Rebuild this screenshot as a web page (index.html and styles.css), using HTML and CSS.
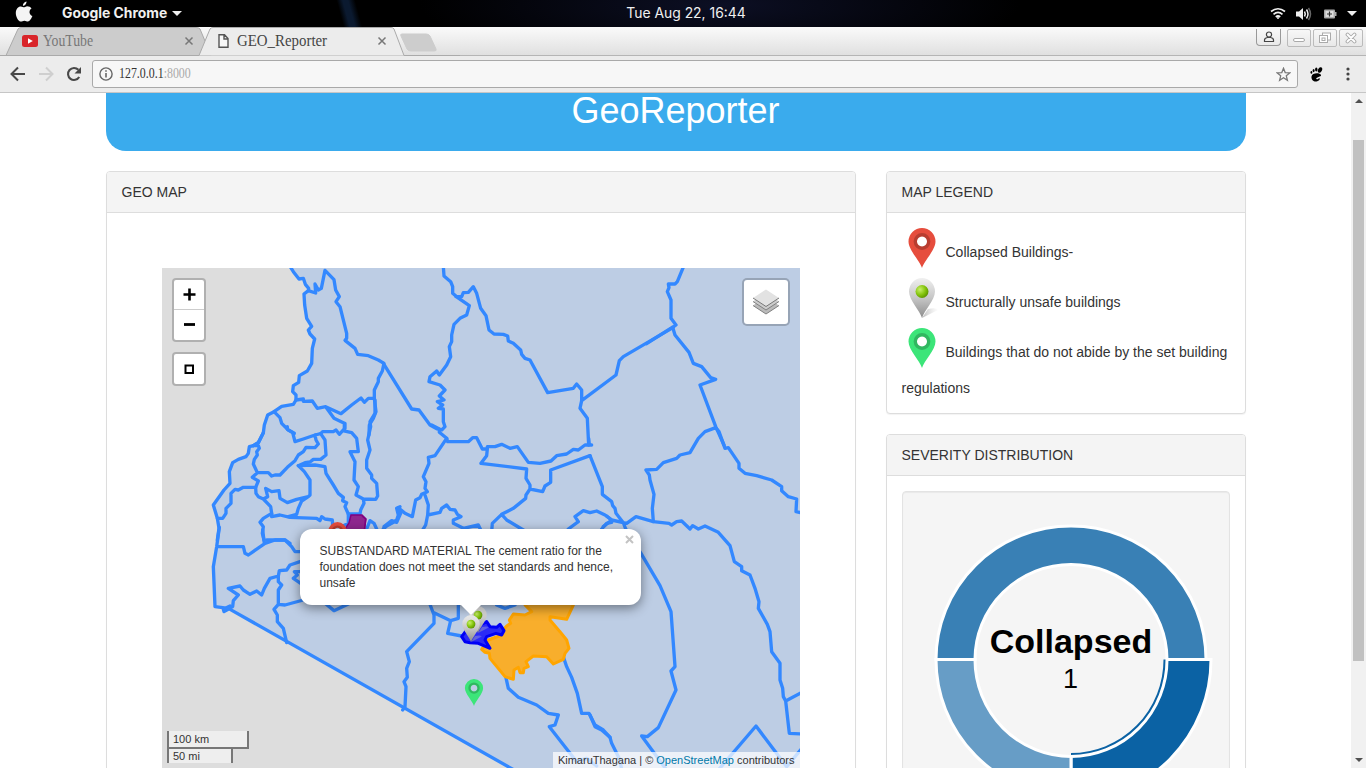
FILE: index.html
```html
<!DOCTYPE html>
<html lang="en">
<head>
<meta charset="utf-8">
<title>GEO_Reporter</title>
<link rel="stylesheet" href="styles.css">
</head>
<body>
<svg class="defs" width="0" height="0">
  <defs>
    <linearGradient id="silver" x1="0" y1="0" x2="0" y2="1"><stop offset="0" stop-color="#f0f0f0"/><stop offset=".5" stop-color="#c6c6c6"/><stop offset="1" stop-color="#8c8c8c"/></linearGradient>
    <linearGradient id="shade" x1="0" y1="0" x2="1" y2="0"><stop offset="0" stop-color="#888"/><stop offset="1" stop-color="#eee" stop-opacity=".3"/></linearGradient>
    <radialGradient id="ball" cx=".35" cy=".35" r=".7"><stop offset="0" stop-color="#c8f06a"/><stop offset=".6" stop-color="#83c40c"/><stop offset="1" stop-color="#5c9400"/></radialGradient>
    <symbol id="pin" viewBox="0 0 40 40">
      <path fill-rule="evenodd" d="M20 40C18 33 6.500 22 6.500 13.500a13.500 13.500 0 0 1 27 0C33.500 22 22 33 20 40zM20 8.500a5 5 0 1 0 .01 0z"/>
      <circle cx="20" cy="13.500" r="6.700" fill="none" stroke="#000" stroke-opacity=".2" stroke-width="3.400"/>
    </symbol>
    <symbol id="pin-silver" viewBox="0 0 40 40">
      <path d="M20 40L36 32Q34 29 26 31z" fill="url(#shade)" opacity=".6"/>
      <path d="M20 40C18 33 7 22 7 13.500a13 13.500 0 0 1 26 0C33 22 22 33 20 40z" fill="url(#silver)"/>
      <circle cx="20" cy="13.500" r="6.500" fill="url(#ball)"/>
    </symbol>
  </defs>
</svg>

<header class="topbar">
  <div class="app">
    <svg class="apple" width="18" height="22" viewBox="0 0 18 22"><path fill="#f4f4f4" d="M11.500.5c.2 2-1.600 4.400-3.600 4.300C7.700 2.700 9.600.8 11.500.5zM12 5.300c2 0 3.600.8 4.500 2.200-3 2-2.500 6.200.9 7.600-.8 2.200-2.700 5.500-4.500 5.500-1.300 0-1.900-.8-3.500-.8s-2.300.8-3.500.8C3.500 20.600.6 15.800.8 11.700.9 7.900 3.200 5.400 5.800 5.400c1.500 0 2.500.9 3.600.9.900 0 1.700-1 2.600-1z"/></svg>
    <span class="app-name">Google Chrome</span><i class="caret"></i>
  </div>
  <div class="clock">Tue Aug 22, 16:44</div>
  <div class="status">
    <svg width="16" height="13" viewBox="0 0 16 13" fill="none" stroke="#eee" stroke-width="1.700"><path d="M1 4.500Q8-1 15 4.500M3.500 7.300Q8 3.500 12.500 7.300M5.800 10Q8 8 10.200 10"/><circle cx="8" cy="11" r="1" fill="#eee" stroke="none"/></svg>
    <svg class="volume" width="16" height="14" viewBox="0 0 16 14"><path fill="#eee" d="M0 4.500h3L7 1v12L3 9.500H0z"/><path fill="none" stroke="#eee" stroke-width="1.500" d="M8.500 4.500q1.500 2.500 0 5M10.500 2.500q3 4.500 0 9"/><path fill="none" stroke="#666" stroke-width="1.500" d="M12.500 1q4 6 0 12"/></svg>
    <svg class="battery" width="13" height="10" viewBox="0 0 13 10"><rect width="11" height="9" y=".5" fill="#aaa" rx="1"/><rect x="1.500" y="2" width="8" height="6" fill="#ddd"/><path stroke="#333" stroke-width="1.200" d="M3 5h5M5.500 2.500v5"/><path fill="#aaa" d="M11 3h1.500v4H11z"/></svg>
    <i class="caret"></i>
  </div>
</header>

<div class="tabstrip">
  <svg class="tab-shapes" width="460" height="29" viewBox="0 0 460 29">
    <path d="M6 28.500L18 2Q19 .5 21 .5H196Q199 .5 200 2L211 28.500z" fill="#ccc" stroke="#aaa"/>
    <path d="M401 9Q400 7 402 7H426Q429 7 430 9L436 22Q437 24 434 24H411Q408 24 407 22z" fill="#cdcdcd" stroke="#cdcdcd"/>
    <path d="M199 28.500L210 2Q211 .5 213 .5H391Q393 .5 394 2L404 28.500z" fill="#ececec"/>
    <path d="M0 28.500H199L210 2Q211 .5 213 .5H391Q393 .5 394 2L404 28.500H460" fill="none" stroke="#aaa"/>
  </svg>
  <div class="tab tab-youtube">
    <svg width="16" height="12" viewBox="0 0 16 12"><rect width="16" height="12" rx="2.500" fill="#d9252a"/><path fill="#fff" d="M6 3.300L10.800 6 6 8.700z"/></svg>
    <span class="tab-title">YouTube</span>
    <svg class="tab-close" width="10" height="10" viewBox="0 0 10 10"><path d="M1.500 1.500l7 7m0-7l-7 7" stroke="#777" stroke-width="1.500"/></svg>
  </div>
  <div class="tab tab-geo">
    <svg width="11" height="14" viewBox="0 0 11 14"><path d="M1 .8h5.500L10 4.500v8.700H1zM6 1v4h4" fill="#f8f8f8" stroke="#555" stroke-width="1.400"/></svg>
    <span class="tab-title">GEO_Reporter</span>
    <svg class="tab-close" width="10" height="10" viewBox="0 0 10 10"><path d="M1.500 1.500l7 7m0-7l-7 7" stroke="#777" stroke-width="1.500"/></svg>
  </div>
  <div class="window-buttons">
    <span class="user-btn"><svg width="12" height="12" viewBox="0 0 12 12" fill="none" stroke="#444" stroke-width="1.200"><circle cx="6" cy="3.600" r="2.600"/><path d="M1.500 10.500V9q0-2 3-2.500h3q3 .5 3 2.500v1.500z"/></svg></span>
    <span class="win-btn"><svg width="14" height="12" viewBox="0 0 14 12"><rect x="1.500" y="6.500" width="11" height="3" rx="1.500" fill="#fff" stroke="#aaa"/></svg></span>
    <span class="win-btn"><svg width="14" height="12" viewBox="0 0 14 12" fill="#fff" stroke="#aaa"><rect x="4.500" y="1" width="8" height="7"/><rect x="1.500" y="3.500" width="8" height="7"/><rect x="4" y="6" width="3" height="2.500"/></svg></span>
    <span class="win-btn"><svg width="14" height="12" viewBox="0 0 14 12"><path d="M3.500 2.500l7 7m0-7l-7 7" stroke="#aaa" stroke-width="3.800" stroke-linecap="round"/><path d="M3.500 2.500l7 7m0-7l-7 7" stroke="#fff" stroke-width="1.800" stroke-linecap="round"/></svg></span>
  </div>
</div>

<div class="toolbar">
  <svg class="nav" width="16" height="16" viewBox="0 0 16 16"><path d="M15 8H2M8 1.500L1.500 8 8 14.500" fill="none" stroke="#484848" stroke-width="2"/></svg>
  <svg class="nav" width="16" height="16" viewBox="0 0 16 16"><path d="M1 8h13M8 1.500L14.500 8 8 14.500" fill="none" stroke="#cfcfcf" stroke-width="2"/></svg>
  <svg class="nav" width="16" height="16" viewBox="0 0 16 16"><path d="M13.200 11A6 6 0 1 1 12.400 3.800" fill="none" stroke="#484848" stroke-width="2.100"/><path fill="#484848" d="M15 1v6.500H8.500z"/></svg>
  <div class="address">
    <svg width="14" height="14" viewBox="0 0 14 14"><circle cx="7" cy="7" r="6.100" fill="none" stroke="#666" stroke-width="1.400"/><path stroke="#666" stroke-width="1.600" d="M7 6v4.500M7 3.300v1.500"/></svg>
    <span class="url">127.0.0.1<em>:8000</em></span>
    <svg class="star" width="15" height="15" viewBox="0 0 15 15"><path d="M7.500 1.300l1.700 4.300 4.600.3-3.500 2.900 1.100 4.500-3.900-2.500-3.900 2.500 1.100-4.500-3.500-2.900 4.600-.3z" fill="none" stroke="#777" stroke-width="1.300"/></svg>
  </div>
  <svg class="foot" width="13" height="15" viewBox="0 0 13 15"><g><ellipse cx="10" cy="3" rx="2" ry="2.900" transform="rotate(25 10 3)"/><ellipse cx="6.300" cy="2.500" rx="1.200" ry="1.900"/><ellipse cx="3.600" cy="3.600" rx="1" ry="1.600"/><ellipse cx="1.400" cy="5.400" rx=".9" ry="1.400"/><path d="M11 8C10 5.500 2 5.500 1.500 9.500 1 13 4 15 6.500 14.500 9 14 10.500 12 9.500 11.300 8.500 10.600 8 13 6.500 12 5.500 11.300 7 10.500 8.500 10 10 9.500 11.300 9 11 8z"/></g></svg>
  <svg class="menu" width="4" height="14" viewBox="0 0 4 14" fill="#444"><circle cx="2" cy="2" r="1.600"/><circle cx="2" cy="7" r="1.600"/><circle cx="2" cy="12" r="1.600"/></svg>
</div>

<div class="viewport">
  <div class="page">
    <div class="banner">GeoReporter</div>
    <div class="columns">
      <section class="panel">
        <div class="panel-heading">GEO MAP</div>
        <div class="map">
          <svg class="map-canvas" width="638" height="500" viewBox="162 268 638 500">
            <path class="land" d="M291 268L299 279 303 278 309 288 309 291 304 294 306 318 312 326 308 330 315 339 312 348 312 363 307 371 299 376 299 382 293 386 293 392 296 395 296 400 293 404 282 406 274 412 268 415 264 422 263 433 253 446 249 447 246 457 232 463 229 472 230 483 213 505 217 518 219 528 217 547 213 567 215 607 228 608 510 768H800V268z"/>
            <g class="border" transform="translate(160 265) scale(.33333)">
              <path d="M390 4L400 20 417 42 430 40 436 58 446 70 445 77 432 87 434 120 440 160 455 184 445 195 450 207 464 222 457 250 455 295 442 318 418 332 416 352 400 362 398 380 408 390 408 405 400 418 365 424 342 440 323 450 313 480 310 503 295 533 280 542"/>
              <path d="M445 77L467 84 465 57 475 75 484 70 495 16 522 44 527 75 538 95 528 110 540 125 560 205 560 220 555 226 585 250 593 268 625 272 655 285 672 295 667 318 655 340 655 350 643 375 643 400 648 440 640 460 628 480 627 510"/>
              <path d="M408 405L430 402 430 409 457 408 472 430 497 425 543 446 575 420 603 399 613 412 625 400 643 400M497 425L522 460 553 475 553 492M342 440L360 458 365 475 385 495 403 505"/>
            </g>
            <g class="border" transform="translate(200 400) scale(.33333)">
              <path d="M190 98L175 128 160 137 148 140 145 160 138 170 115 178 98 188 88 215 90 250 72 270 40 315 52 355 57 385 52 420"/>
              <path d="M262 80L262 88 278 98 285 125 310 117 345 105 362 101 375 120 378 165 362 178 340 178 330 186 315 188 295 197M345 105L348 120 355 132 345 143 318 142 310 155 295 165 285 182 262 202 240 225 225 225 215 228 205 218 172 218 160 192 163 178 172 165 170 155 178 145 175 137 160 137M172 218L157 232 175 243 167 262 130 262 115 270 105 268 93 280 93 310 78 325 78 340 68 355 52 355"/>
              <path d="M167 262L168 280 175 290 190 297 212 320 215 340 190 355 180 367 190 380 187 400 192 420M190 297L203 290 197 265 215 275 237 272 240 295 262 308 290 298 325 290 305 303 295 325 290 343 265 350M325 290L330 285 330 240 313 215 295 197 345 195 375 200 378 220 400 255 415 280 430 292 428 302 440 308 435 320 445 342"/>
              <path d="M362 101L368 95 400 95 408 90 418 103 428 92 455 98 470 115 475 155 450 155 465 185 462 240 475 260 468 285 490 297 527 298 533 288 530 250 515 235 515 225 500 205 500 180 510 150 503 120 512 80 510 65 525 40 525 0M490 297L492 310 482 330 480 342 445 342 445 370 425 380M435 70L435 85 428 92"/>
              <path d="M215 340L215 350 240 345 270 352 350 355 360 362 365 350 375 357 397 360 398 378M500 387L510 362 522 370 530 387M550 387L560 378 575 370 590 360 595 345 590 325 600 320M200 420H255L270 430"/>
            </g>
            <g class="border" transform="translate(160 500) scale(.33333)">
              <path d="M178 82L170 140 160 200 165 320 205 325 1080 820M170 140H250L255 160 265 165 315 130 345 120 375 120 395 140 405 155 430 155M308 90L313 130M210 318L190 328 192 335 210 325"/>
              <path d="M205 325L218 320 220 302 235 285 205 265 240 258 250 270 270 283 290 273 305 285 313 265 330 235 355 228 358 212 380 210 390 195 420 185M355 228L355 245 365 255 355 270 355 313 375 315 430 300M355 313L342 328 352 345 352 365 370 385 380 428M430 215L403 215 412 225 400 235 422 250M495 310L522 332 565 312"/>
            </g>
            <g class="border" transform="translate(380 265) scale(.33333)">
              <path d="M190 4L192 33 212 50 218 65 218 85 232 97 268 122 260 150 240 160 222 178 215 210 215 230 208 245 212 275 200 300 178 330 170 318 150 335 147 350 180 360 195 375 178 393 192 405 172 410 188 420 175 430 190 432 190 470 195 485 185 495 172 492 150 480 117 435 95 432 10 295"/>
              <path d="M228 95L245 95 250 83 265 82 280 65 290 85 302 130 318 152 327 195 342 207 370 208 383 213 385 228 400 235 422 255 425 268 435 280 450 285 503 383 580 370 590 357 605 375 605 407 600 430 622 460 626 540M605 407L708 330 718 287 730 275 880 187"/>
            </g>
            <g class="border" transform="translate(590 265) scale(.33333)">
              <path d="M281 4L262 50 255 57 235 57 237 68 232 80 243 105 243 160 258 180 248 187 255 210 297 262 310 295 335 305 362 338 377 343 330 360 378 487 402 540M250 185L170 236"/>
            </g>
            <g class="border" transform="translate(380 425) scale(.33333)">
              <path d="M155 0L178 12 178 22 200 40 165 92 145 97 147 115 130 155 138 170 135 190 142 200 125 208 120 218 107 225 97 275 75 265 55 248 62 265 50 292 35 287 12 305 12 320M135 210L145 240 143 270 137 300 125 320M143 270L180 262 185 250 200 240 210 253 225 255 232 268 243 275 220 285 220 295 250 310 295 300 305 320"/>
              <path d="M200 40L203 50 265 50 278 38 290 38 307 72 322 72 322 65 345 65 365 58 390 70 412 65 445 112 480 115 513 108 530 92 560 87 580 73 595 75 615 60 635 60M626 40L628 60M322 72L320 92 303 115 440 132 438 160 450 180 450 192 488 200 495 183 512 172 512 135 630 92M450 192L438 210 437 220 400 250 365 268 337 295 335 320M365 268L380 285 435 318M565 312L595 290 585 275 610 257 630 263 650 258 675 270 695 285 670 305"/>
            </g>
            <g class="border" transform="translate(590 425) scale(.33333)">
              <path d="M0 92L37 185 37 208 65 230 68 242 75 250 78 265 100 293 107 312 153 385 210 482 243 560 255 725 243 738 258 795 205 908 172 935 155 933 230 1035M50 273L65 285 110 295 138 275 190 290 237 295 245 300 260 290 275 288 300 312 308 302 325 312 345 303 385 322 420 362 433 410 455 425 455 437 480 450 495 490 507 530 505 550 532 598 540 620 545 680 570 715 570 765 578 790 580 815 587 828 598 925 640 927M587 828L640 800M65 292L50 295 35 312"/>
              <path d="M190 290L187 250 192 208 180 165 178 150 168 135 200 133 220 113 260 100 270 90 300 83 325 40 345 20 377 8 387 20 405 70 415 68 447 115 447 130 465 145 500 152 545 165 575 185 575 197 595 215 620 222 618 260 640 265M385 1035L498 903 590 1025 640 965M0 870L15 905 35 915 60 937 65 955 90 1005 95 1035"/>
            </g>
            <g class="border" transform="translate(390 590) scale(.33333)">
              <path d="M115 30L132 75 132 100 50 185 58 215 50 235 52 262 42 275 48 290 45 350 38 360M132 68L182 92 173 130 215 138M182 92L205 85 205 35M345 250L355 295 385 322 440 345 475 370 505 375 495 405 478 410 560 515 590 505 620 528M520 200L530 230 545 262 562 310 575 370 597 370 615 405 640 420 660 442M320 45L345 55 375 45"/>
            </g>
            <g transform="translate(390 590) scale(.33333)">
              <path class="region-orange" d="M405 45L425 65 405 75 370 72 358 90 362 100 350 108 340 120 335 135 295 150 275 178 285 187 298 190 300 205 345 260 370 268 372 240 385 232 390 248 400 248 402 235 415 230 408 215 430 198 470 200 490 222 520 208 525 190 537 175 530 150 510 125 480 90 480 80 500 83 530 88 550 45 550 30H405z"/>
              <path class="region-blue" d="M215 140L230 120 280 100 290 95 300 110 320 112 330 103 342 122 335 135 318 130 290 140 285 150 300 175 265 160 240 158 225 155z"/>
            </g>
            <path class="region-purple" d="M351 515L362 515 366 519 364 532H343L349 523z"/>
            <path class="region-purple" d="M362 516L365.500 519 364.500 530"/>
            <use href="#pin" x="324" y="522" width="27" height="27" fill="#e64d3d"/>
            <use href="#pin-silver" x="464.500" y="606" width="27" height="27"/>
            <use href="#pin-silver" x="457.500" y="615" width="27" height="27"/>
            <use href="#pin" x="460.500" y="679" width="27" height="27" fill="#3ce579"/>
          </svg>
          <div class="controls">
            <div class="bar"><span class="plus"><svg width="14" height="14"><path d="M7.500 .5v12M1.500 6.500h12" stroke="#000" stroke-width="2.600"/></svg></span><span><svg width="14" height="14"><path d="M2 6.500h11" stroke="#000" stroke-width="2.800"/></svg></span></div>
            <div class="bar"><span><svg width="10" height="10"><rect x="1.500" y="1.500" width="7.500" height="7.500" fill="none" stroke="#000" stroke-width="2"/></svg></span></div>
          </div>
          <div class="layers"><svg width="28" height="28" viewBox="0 0 28 28"><path d="M1 17.500L14 9l13 8.500L14 26z" fill="#bbb"/><path d="M1 17.500L14 26l13-8.500" fill="none" stroke="#808080"/><path d="M1 13.500L14 5l13 8.500L14 22z" fill="#ccc"/><path d="M1 13.500L14 22l13-8.500" fill="none" stroke="#808080"/><path d="M1 10L14 1.500 27 10 14 18.500z" fill="#e2e2e2"/><path d="M1 10L14 18.500 27 10" fill="none" stroke="#777"/></svg></div>
          <div class="scale"><div class="scale-km">100 km</div><div class="scale-mi">50 mi</div></div>
          <div class="attribution">KimaruThagana | © <a>OpenStreetMap</a> contributors</div>
          <div class="popup">
            <svg class="popup-close" width="9" height="9" viewBox="0 0 9 9"><path d="M1 1l7 7m0-7L1 8" stroke="#c3c3c3" stroke-width="2"/></svg>
            <p>SUBSTANDARD MATERIAL The cement ratio for the<br>foundation does not meet the set standards and hence,<br>unsafe</p>
            <i class="tip"></i>
          </div>
        </div>
      </section>
      <aside class="side">
        <section class="panel">
          <div class="panel-heading">MAP LEGEND</div>
          <div class="legend">
            <div class="legend-row"><svg width="40" height="40" fill="#e64d3d"><use href="#pin"/></svg><span>Collapsed Buildings-</span></div>
            <div class="legend-row"><svg width="40" height="40"><use href="#pin-silver"/></svg><span>Structurally unsafe buildings</span></div>
            <div class="legend-row"><svg width="40" height="40" fill="#3ce579"><use href="#pin"/></svg><span>Buildings that do not abide by the set building</span></div>
            <div class="legend-more">regulations</div>
          </div>
        </section>
        <section class="panel severity">
          <div class="panel-heading">SEVERITY DISTRIBUTION</div>
          <div class="well">
            <svg width="326" height="340" viewBox="903 492 326 340">
              <g stroke="#fff" stroke-width="3">
                <path fill="#0b62a4" d="M1167 659.500H1211A140 141 0 0 1 1071 800.500V756.500A96 97 0 0 0 1167 659.500z"/>
                <path fill="#3980b5" d="M975 659.500H936A135 133.500 0 0 1 1206 659.500H1167A96 95 0 0 0 975 659.500z"/>
                <path fill="#679dc6" d="M975 659.500H936A135 136 0 0 0 1071 795.500V756.500A96 97 0 0 1 975 659.500z"/>
              </g>
              <path fill="none" stroke="#0b62a4" stroke-width="2" d="M1164.500 659.500A93.500 94.500 0 0 1 1071 754"/>
              <text class="donut-label" x="1071" y="652.500">Collapsed</text>
              <text class="donut-value" x="1070.500" y="688">1</text>
            </svg>
          </div>
        </section>
      </aside>
    </div>
  </div>
  <div class="scrollbar"><i class="arrow-up"></i><div class="thumb"></div><i class="arrow-down"></i></div>
</div>
</body>
</html>
```
FILE: styles.css
```css
* { box-sizing: border-box; }
body {
  margin: 0; width: 1366px; height: 768px; overflow: hidden;
  display: flex; flex-direction: column; background: #fff;
  font: 14px/20px "Liberation Sans", Arial, sans-serif; color: #333;
}
svg { display: block; flex: none; }
.defs { position: absolute; }

.topbar {
  flex: none; height: 27px; padding: 0 9px 0 15px; color: #f0f0f0;
  display: grid; grid-template-columns: 1fr auto 1fr; align-items: center;
  background: linear-gradient(75deg, transparent 332px, #0b1a30 338px, #0b1a30 343px, transparent 350px),
    radial-gradient(ellipse 300px 60px at 720px 5px, #0c0f24, #000);
  font: 700 13.9px/26px Inter, sans-serif;
}
.app { display: flex; align-items: center; }
.app-name { margin: -1px 5px 0 29px; }
.apple { margin-top: -3px; }
.caret { border: 5px solid transparent; border-top-color: #eee; border-bottom: 0; }
.clock { font-size: 13.9px; font-weight: 400; margin-top: -1px; }
.status { display: flex; justify-content: flex-end; align-items: center; }
.volume { margin-left: 10px; }
.battery { margin: 0 10px 0 12px; }

.tabstrip {
  position: relative; flex: none; height: 29px; display: flex;
  background: linear-gradient(#fafafa, #e0e0e0); border-bottom: 1px solid #b5b5b5;
}
.tab-shapes { position: absolute; left: 0; top: 0; }
.tab { position: relative; display: flex; align-items: center; font: 16px/20px "Liberation Serif", serif; }
.tab-youtube { padding-left: 22px; width: 194px; color: #777; }
.tab-geo { padding-left: 24px; width: 193px; color: #444; }
.tab-title { margin-left: 5px; flex: 1; transform: scaleX(.86); transform-origin: left; }
.tab-geo .tab-title { margin-left: 8px; transform: scaleX(.93); }
.window-buttons { display: flex; margin-left: auto; padding-right: 3px; }
.user-btn, .win-btn { display: flex; align-items: center; justify-content: center; border: 1px solid #bbb; }
.user-btn { width: 25px; height: 17px; margin: 2px 6px 0 0; border-color: #999; border-top: 0; border-radius: 0 0 4px 4px; }
.win-btn { width: 24px; height: 18px; margin: 2px 0 0 2px; border-radius: 2px; }
.win-btn:nth-child(2) { margin-left: 0; }

.toolbar {
  flex: none; height: 37px; padding: 0 16px 0 10px; display: flex; align-items: center;
  background: #ececec; border-bottom: 1px solid #c6c6c6;
}
.nav { margin-right: 12px; }
.nav:nth-child(3) { margin-right: 10px; }
.address {
  width: 1206px; height: 28px; padding: 0 6px; display: flex; align-items: center;
  background: #f7f7f7; border: 1px solid #a9a9a9; border-radius: 3px;
}
.url { margin-left: 6px; font: 14px/20px "Liberation Serif", serif; white-space: nowrap; transform: scaleX(.85); transform-origin: left; }
.url em { font-style: normal; color: #aaa; }
.star { margin-left: auto; }
.foot { margin-left: 12px; }
.menu { margin-left: auto; }

.viewport { flex: 1; min-height: 0; display: flex; overflow: hidden; }
.page { flex: 1; min-width: 0; height: 675px; overflow: hidden; padding: 0 105px 0 106px; }
.banner {
  height: 58px; border-radius: 0 0 20px 20px; background: #3aabed; color: #fff;
  text-align: center; font-size: 36px; line-height: 35px; padding-right: 1px;
}
.columns { margin-top: 20px; display: grid; grid-template-columns: 750px 360px; gap: 30px; }
.panel { border: 1px solid #ddd; border-radius: 4px; background: #fff; box-shadow: 0 1px 1px rgba(0,0,0,.05); }
.panel-heading { height: 41px; padding: 10px 14.5px; background: #f4f4f4; border-bottom: 1px solid #ddd; border-radius: 3px 3px 0 0; }
.map { position: relative; width: 638px; height: 500px; margin: 55px 0 40px 55px; background: #ddd; overflow: hidden; font-size: 12px; }
.land { fill: #bdcde4; }
.border { fill: none; stroke: #3388ff; stroke-width: 10; stroke-linejoin: round; stroke-linecap: round; }
.region-orange { fill: #f8ae2c; stroke: #ffa500; stroke-width: 9; stroke-linejoin: round; }
.region-blue { fill: #2b2bf6; stroke: #0000f5; stroke-width: 9; stroke-linejoin: round; }
.region-purple { fill: #8f278f; stroke: #800080; stroke-width: 1.5; }

.controls { position: absolute; left: 10px; top: 10px; display: grid; gap: 10px; }
.bar { width: 34px; border: 2px solid rgba(0,0,0,.2); border-radius: 4px; background: #fff; background-clip: padding-box; }
.bar span { display: flex; height: 30px; align-items: center; justify-content: center; }
.bar .plus { height: 30px; border-bottom: 1px solid #ccc; }
.layers {
  position: absolute; right: 10px; top: 10px; width: 48px; height: 48px; display: grid; place-items: center;
  border: 2px solid rgba(0,0,0,.2); border-radius: 5px; background: #fff; background-clip: padding-box;
}
.controls .bar:first-child { height: 64px; }
.scale { position: absolute; left: 5px; top: 463px; font-size: 11px; line-height: 16px; }
.scale div { padding-left: 4px; border: 2px solid #777; border-top: 0; background: #eee; white-space: nowrap; }
.scale-km { width: 82px; height: 18px; }
.scale-mi { width: 66px; height: 14px; line-height: 14px; }
.scale .scale-mi { border-bottom: 0; }
.attribution { position: absolute; right: 0; bottom: 0; padding: 0 5.5px 0 5px; background: rgba(255,255,255,.72); font-size: 11px; line-height: 16px; white-space: nowrap; }
.attribution a { color: #0078a8; }
.popup {
  position: absolute; left: 138px; top: 261px; width: 341px; height: 76px; padding: 14px 19.5px;
  border-radius: 12px; background: #fff; box-shadow: 0 3px 12px rgba(0,0,0,.45);
}
.popup p { margin: 0; line-height: 16px; white-space: nowrap; }
.popup-close { position: absolute; right: 7px; top: 6px; }
.tip { position: absolute; left: 160px; top: 75px; border: 11px solid transparent; border-top: 11px solid #fff; border-bottom: 0; }

.side { display: flex; flex-direction: column; gap: 20px; }
.side .panel:first-child { height: 243px; }
.legend { padding: 15px 14.5px; }
.legend-row { display: flex; gap: 4px; height: 50px; white-space: nowrap; }
.legend-row span { padding-top: 14px; }
.severity { padding-bottom: 15px; }
.well { margin: 15px; height: 342px; border: 1px solid #e3e3e3; border-radius: 4px; background: #f5f5f5; box-shadow: inset 0 1px 1px rgba(0,0,0,.05); }
.donut-label { font-weight: bold; font-size: 34px; text-anchor: middle; fill: #000; }
.donut-value { font-size: 27px; text-anchor: middle; fill: #000; }

.scrollbar { width: 15px; padding: 6px 2px 6px; background: #f1f1f1; display: flex; flex-direction: column; align-items: center; }
.thumb { width: 11px; height: 521px; margin-top: 37px; background: #c1c1c1; }
.arrow-up { border: 4px solid transparent; border-bottom-color: #505050; border-top: 0; }
.arrow-down { margin-top: auto; border: 4px solid transparent; border-top-color: #505050; border-bottom: 0; }
```
